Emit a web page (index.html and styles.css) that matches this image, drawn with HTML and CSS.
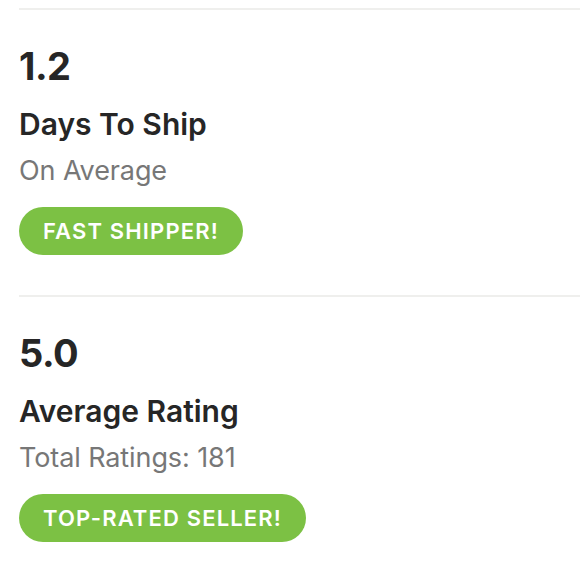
FILE: index.html
```html
<!DOCTYPE html>
<html>
<head>
<meta charset="utf-8">
<link rel="stylesheet" href="styles.css">
</head>
<body>
<div class="stats">
  <section class="stat">
    <div class="value">1.2</div>
    <div class="label">Days To Ship</div>
    <div class="sub">On Average</div>
    <span class="badge">FAST SHIPPER!</span>
  </section>
  <section class="stat">
    <div class="value">5.0</div>
    <div class="label">Average Rating</div>
    <div class="sub">Total Ratings: 181</div>
    <span class="badge">TOP-RATED SELLER!</span>
  </section>
</div>
</body>
</html>
```
FILE: styles.css
```css
html, body {
  margin: 0;
  padding: 0;
  background: #ffffff;
}
body {
  font-family: "Inter", "Liberation Sans", sans-serif;
  color: #262626;
}
.stats {
  padding: 8px 0 0 19px;
}
.stat {
  border-top: 2px solid #efefed;
  padding-top: 36px;
  padding-bottom: 40px;
  display: flex;
  flex-direction: column;
  align-items: flex-start;
}
.value {
  font-size: 38px;
  font-weight: 700;
  line-height: 40px;
  letter-spacing: -0.5px;
}
.label {
  margin-top: 20px;
  font-size: 30px;
  font-weight: 600;
  line-height: 36px;
}
.sub {
  margin-top: 13px;
  font-size: 27px;
  font-weight: 400;
  line-height: 32px;
  color: #777777;
  letter-spacing: -0.1px;
}
.badge {
  margin-top: 20px;
  height: 48px;
  line-height: 48px;
  padding: 0 24px;
  border-radius: 24px;
  background: #7cc144;
  color: #ffffff;
  font-size: 22px;
  font-weight: 600;
  letter-spacing: 1.15px;
}
```
